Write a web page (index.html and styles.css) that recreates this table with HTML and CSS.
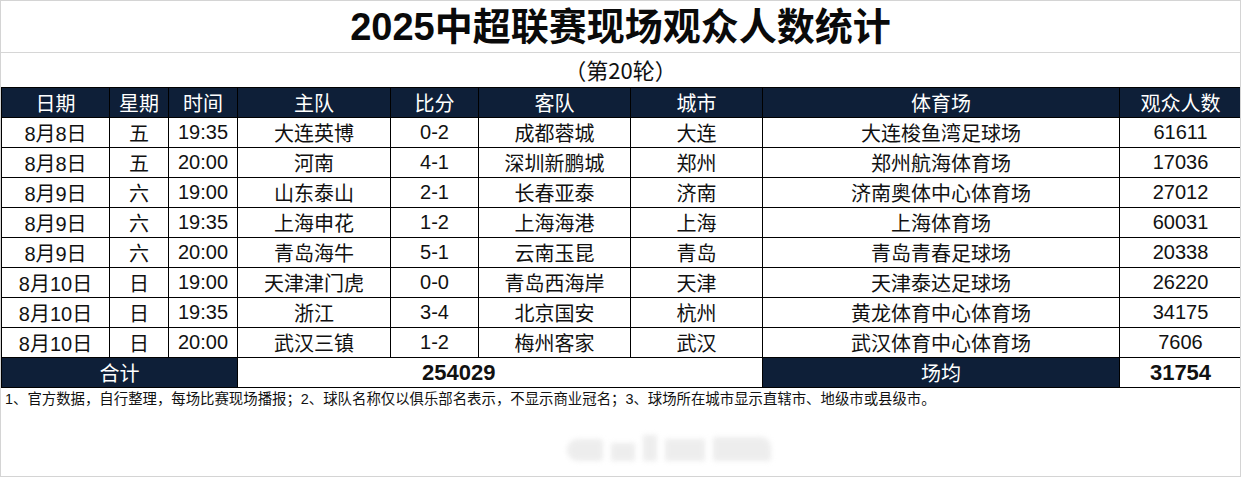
FILE: index.html
```html
<!DOCTYPE html>
<html lang="zh-CN">
<head>
<meta charset="utf-8">
<title>2025中超联赛现场观众人数统计</title>
<link rel="stylesheet" href="styles.css">
</head>
<body>
<div class="sheet">
  <div class="title">2025中超联赛现场观众人数统计</div>
  <div class="subtitle">（第20轮）</div>
  <table class="stats">
    <colgroup>
      <col class="w-date"><col class="w-week"><col class="w-time"><col class="w-home"><col class="w-score"><col class="w-away"><col class="w-city"><col class="w-venue"><col class="w-crowd">
    </colgroup>
    <thead>
      <tr><th>日期</th><th>星期</th><th>时间</th><th>主队</th><th>比分</th><th>客队</th><th>城市</th><th>体育场</th><th>观众人数</th></tr>
    </thead>
    <tbody>
      <tr><td>8月8日</td><td>五</td><td>19:35</td><td>大连英博</td><td>0-2</td><td>成都蓉城</td><td>大连</td><td>大连梭鱼湾足球场</td><td>61611</td></tr>
      <tr><td>8月8日</td><td>五</td><td>20:00</td><td>河南</td><td>4-1</td><td>深圳新鹏城</td><td>郑州</td><td>郑州航海体育场</td><td>17036</td></tr>
      <tr><td>8月9日</td><td>六</td><td>19:00</td><td>山东泰山</td><td>2-1</td><td>长春亚泰</td><td>济南</td><td>济南奥体中心体育场</td><td>27012</td></tr>
      <tr><td>8月9日</td><td>六</td><td>19:35</td><td>上海申花</td><td>1-2</td><td>上海海港</td><td>上海</td><td>上海体育场</td><td>60031</td></tr>
      <tr><td>8月9日</td><td>六</td><td>20:00</td><td>青岛海牛</td><td>5-1</td><td>云南玉昆</td><td>青岛</td><td>青岛青春足球场</td><td>20338</td></tr>
      <tr><td>8月10日</td><td>日</td><td>19:00</td><td>天津津门虎</td><td>0-0</td><td>青岛西海岸</td><td>天津</td><td>天津泰达足球场</td><td>26220</td></tr>
      <tr><td>8月10日</td><td>日</td><td>19:35</td><td>浙江</td><td>3-4</td><td>北京国安</td><td>杭州</td><td>黄龙体育中心体育场</td><td>34175</td></tr>
      <tr><td>8月10日</td><td>日</td><td>20:00</td><td>武汉三镇</td><td>1-2</td><td>梅州客家</td><td>武汉</td><td>武汉体育中心体育场</td><td>7606</td></tr>
    </tbody>
    <tfoot>
      <tr>
        <th colspan="3">合计</th>
        <td colspan="4" class="total">254029</td>
        <th>场均</th>
        <td class="avg">31754</td>
      </tr>
    </tfoot>
  </table>
  <div class="note">1、官方数据，自行整理，每场比赛现场播报；2、球队名称仅以俱乐部名表示，不显示商业冠名；3、球场所在城市显示直辖市、地级市或县级市。</div>
  <div class="watermark" aria-hidden="true">
    <span class="wm-a"></span><span class="wm-b"></span><span class="wm-c"></span><span class="wm-d"></span><span class="wm-e"></span>
  </div>
</div>
</body>
</html>
```

FILE: styles.css
```css
html, body {
  margin: 0;
  padding: 0;
  background: #ffffff;
}

body {
  font-family: "Liberation Sans", "Noto Sans CJK SC", sans-serif;
  color: #111111;
}

.sheet {
  width: 1241px;
  height: 477px;
  box-sizing: border-box;
  border: 1px solid #d4d4d4;
  display: flex;
  flex-direction: column;
  overflow: hidden;
}

.title {
  height: 51px;
  line-height: 52px;
  border-bottom: 1px solid #d6d6d6;
  text-align: center;
  font-size: 38px;
  font-weight: bold;
  color: #0a0a0a;
}

.subtitle {
  height: 34px;
  line-height: 32px;
  text-align: center;
  font-size: 22px;
  color: #111111;
  text-spacing-trim: space-all;
  font-family: "Noto Sans CJK SC", sans-serif;
}

.stats {
  border-collapse: collapse;
  table-layout: fixed;
  width: 1240px;
  font-size: 20px;
}

.w-date { width: 108px; }
.w-week { width: 59px; }
.w-time { width: 69px; }
.w-home { width: 153px; }
.w-score { width: 88px; }
.w-away { width: 152px; }
.w-city { width: 132px; }
.w-venue { width: 357px; }
.w-crowd { width: 122px; }

.stats th,
.stats td {
  border: 1px solid #000000;
  padding: 0;
  text-align: center;
  white-space: nowrap;
  overflow: hidden;
}

.stats thead th {
  height: 28px;
  background: #0e1f38;
  color: #ffffff;
  font-weight: normal;
}

.stats tbody td {
  height: 29px;
  color: #111111;
}

.stats tfoot th {
  height: 29px;
  background: #0e1f38;
  color: #ffffff;
  font-weight: normal;
}

.stats tfoot td {
  font-weight: bold;
  font-size: 22px;
  color: #111111;
}

.stats tfoot td.total {
  text-align: left;
  padding-left: 184px;
}

.note {
  padding: 1px 0 0 4px;
  font-size: 14.4px;
  line-height: 20px;
  color: #111111;
  white-space: nowrap;
  text-spacing-trim: space-all;
}

.watermark {
  margin: 16px 0 0 566px;
  display: flex;
  align-items: flex-end;
  gap: 8px;
  height: 36px;
  filter: blur(2.5px);
  opacity: 0.5;
}

.watermark span {
  display: block;
  background: #dcdcdc;
}

.wm-a { width: 36px; height: 22px; border-radius: 12px 4px 4px 12px; }
.wm-b { width: 24px; height: 18px; }
.wm-c { width: 14px; height: 26px; }
.wm-d { width: 40px; height: 22px; }
.wm-e { width: 58px; height: 24px; border-radius: 2px 10px 2px 2px; }
```
